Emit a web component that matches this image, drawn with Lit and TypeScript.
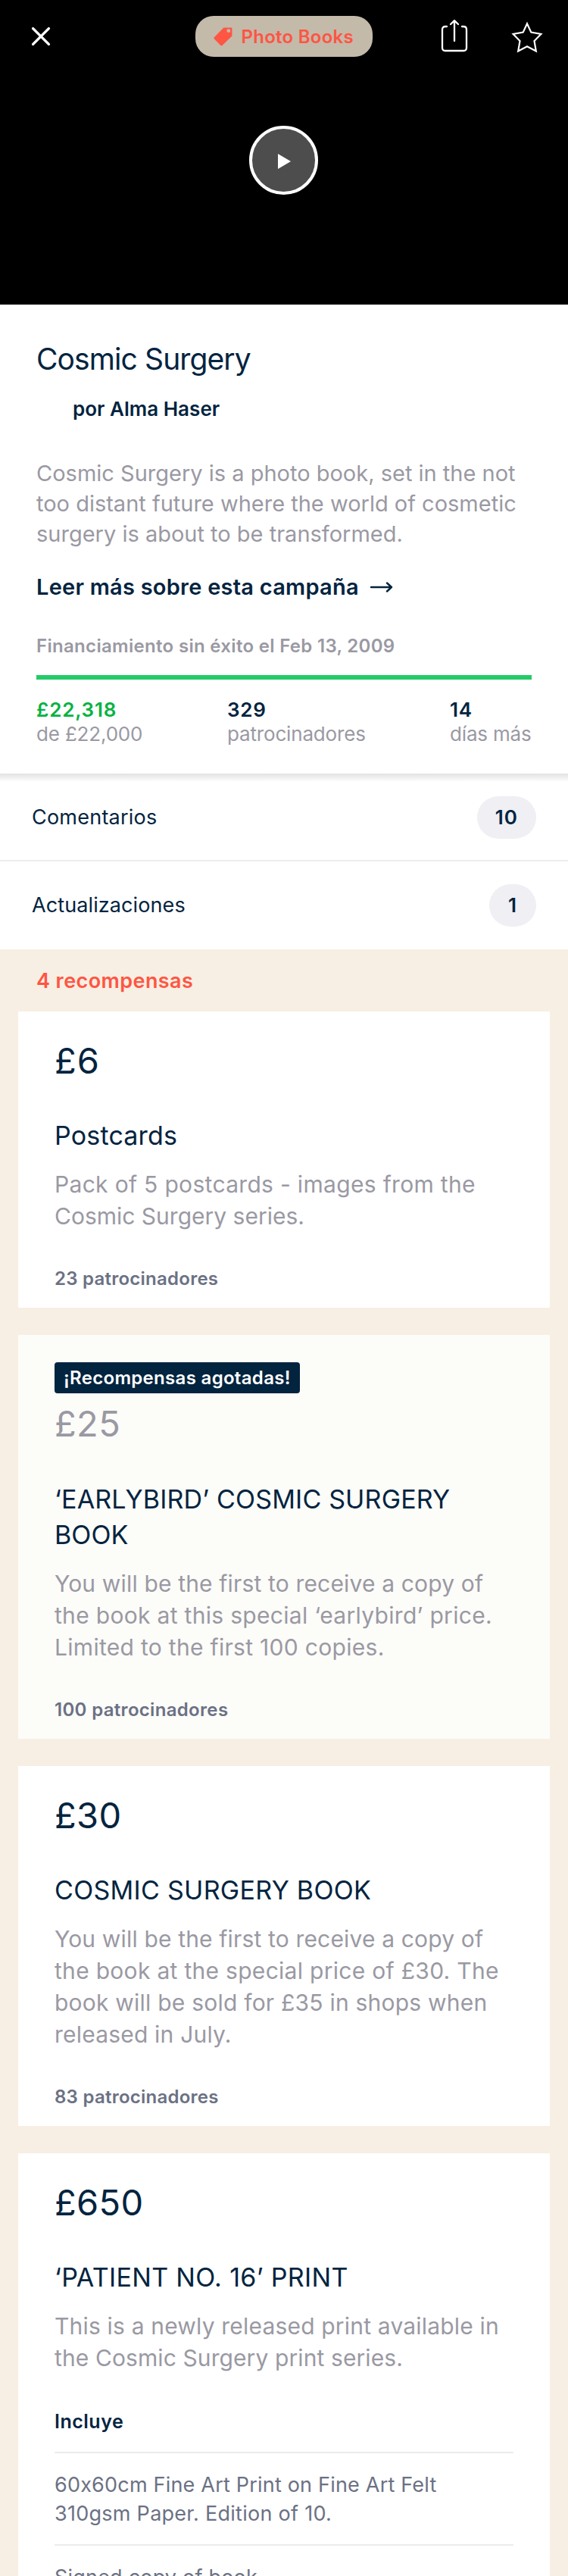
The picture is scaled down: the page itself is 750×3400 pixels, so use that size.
import { LitElement, html, css, svg, nothing } from "lit";
import { customElement, property } from "lit/decorators.js";

/** One line of copy together with its tracking, in px. */
type Line = [text: string, tracking: number];

interface Reward {
  amount: Line;
  title: Line[];
  description: Line[];
  backers?: Line;
  soldOut?: boolean;
  items?: Line[][];
}

const rewards: Reward[] = [
  {
    amount: ["£6", 1],
    title: [["Postcards", 0.18]],
    description: [["Pack of 5 postcards - images from the", 0.316], ["Cosmic Surgery series.", 0]],
    backers: ["23 patrocinadores", 0.25],
  },
  {
    soldOut: true,
    amount: ["£25", 0.4],
    title: [["‘EARLYBIRD’ COSMIC SURGERY", 0.17], ["BOOK", 0.1]],
    description: [
      ["You will be the first to receive a copy of", 0.16],
      ["the book at this special ‘earlybird’ price.", 0.307],
      ["Limited to the first 100 copies.", 0.3],
    ],
    backers: ["100 patrocinadores", 0.32],
  },
  {
    amount: ["£30", 0.4],
    title: [["COSMIC SURGERY BOOK", 0.298]],
    description: [
      ["You will be the first to receive a copy of", 0.16],
      ["the book at the special price of £30. The", 0.296],
      ["book will be sold for £35 in shops when", 0.22],
      ["released in July.", 0.2],
    ],
    backers: ["83 patrocinadores", 0.25],
  },
  {
    amount: ["£650", 0.36],
    title: [["‘PATIENT NO. 16’ PRINT", 0.336]],
    description: [["This is a newly released print available in", 0.184], ["the Cosmic Surgery print series.", 0.1]],
    items: [
      [["60x60cm Fine Art Print on Fine Art Felt", 0.2], ["310gsm Paper. Edition of 10.", 0.267]],
      [["Signed copy of book.", 0.2]],
    ],
  },
];

const lines = (all: Line[]) =>
  all.map(([text, tracking]) => html`<span class="line" style="letter-spacing:${tracking}px">${text}</span>`);

@customElement("reward-card")
export class RewardCard extends LitElement {
  @property({ attribute: false }) reward!: Reward;

  static styles = css`
    :host { display: block; }
    .line { display: block; white-space: nowrap; }
    .card { background: #fff; padding: 37px 48px 23px; }
    .card.sold { background: #fcfcf9; padding-top: 36px; }
    .tag {
      width: 324px; height: 41px; line-height: 41px; margin-bottom: 12px; box-sizing: border-box;
      padding-left: 12px; border-radius: 4px; background: #03243f; color: #fff;
      font-size: 24px; font-weight: 600; letter-spacing: 0.31px; white-space: nowrap;
    }
    .amount { font-size: 47px; line-height: 56px; color: #03243f; }
    .sold .amount { color: #9a99a3; margin-bottom: 49px; }
    .title { margin-top: 47.5px; font-size: 34px; line-height: 46.5px; color: #03243f; }
    .sold .title { margin-top: 0; }
    .desc { margin-top: 20px; font-size: 30px; line-height: 42px; color: #9a99a3; }
    .backers { margin-top: 47px; font-size: 24px; line-height: 30px; font-weight: 600; color: #6b7184; }
    .includes {
      margin-top: 48px; padding-bottom: 24px; font-size: 25px; line-height: 31px;
      font-weight: 600; letter-spacing: 0.5px; color: #03243f;
    }
    .item { border-top: 2px solid #ececee; padding: 23px 0 21px; font-size: 27px; line-height: 38px; color: #6b7184; }
  `;

  render() {
    const r = this.reward;
    return html`
      <article class="card ${r.soldOut ? "sold" : ""}">
        ${r.soldOut ? html`<div class="tag">¡Recompensas agotadas!</div>` : nothing}
        <div class="amount">${lines([r.amount])}</div>
        <div class="title">${lines(r.title)}</div>
        <div class="desc">${lines(r.description)}</div>
        ${r.backers ? html`<div class="backers">${lines([r.backers])}</div>` : nothing}
        ${r.items
          ? html`<div class="includes">Incluye</div>
              ${r.items.map((item) => html`<div class="item">${lines(item)}</div>`)}`
          : nothing}
      </article>
    `;
  }
}

const closeIcon = html`<svg class="close" width="28" height="28" viewBox="0 0 28 28">
  <path d="M3.6 3.6 24.4 24.4M24.4 3.6 3.6 24.4" stroke="#fff" stroke-width="3.4" stroke-linecap="round" />
</svg>`;

const tagIcon = html`<svg width="25" height="25" viewBox="0 0 25 25">
  <path fill="#ff5543" fill-rule="evenodd"
    d="M13.4 0.4H23.2Q24.4 0.4 24.4 1.6V11.4L11.4 24Q10.4 24.8 9.4 24L.8 15.2Q0 14.2.8 13.2ZM19.8 2.3A2.4 2.4 0 1 0 19.8 7.1 2.4 2.4 0 1 0 19.8 2.3Z" />
</svg>`;

const shareIcon = html`<svg class="share" width="36" height="44" viewBox="0 0 36 44">
  ${svg`<g fill="none" stroke="#fff" stroke-width="2.3" stroke-linecap="round" stroke-linejoin="round">
    <path d="M8 10H6Q2 10 2 14V38Q2 42 6 42H30Q34 42 34 38V14Q34 10 30 10H28" />
    <path d="M18 29V2.6M13 7 18 2.2 23 7" />
  </g>`}
</svg>`;

const starIcon = html`<svg class="star" width="46" height="46" viewBox="0 0 46 46">
  <path d="M23 4.2 28.3 15.6 41.4 18 32.5 27.1 34.8 40.4 23 34.3 11.2 40.4 13.5 27.1 4.6 18 17.7 15.6Z"
    fill="none" stroke="#fff" stroke-width="2.2" stroke-linejoin="miter" />
</svg>`;

@customElement("app-root")
export class AppRoot extends LitElement {
  static styles = css`
    :host {
      display: block; width: 750px; height: 3400px; overflow: hidden; background: #fff; color: #03243f;
      font-family: "Inter", "Liberation Sans", sans-serif; font-feature-settings: "calt" 0;
    }
    svg { display: block; flex: none; }
    .hero { height: 402px; background: #000; display: flex; flex-direction: column; align-items: center; }
    .bar { width: 750px; height: 96px; display: flex; align-items: center; box-sizing: border-box; padding-left: 40px; }
    .pill {
      width: 234px; height: 54px; margin-left: 190px; border-radius: 24px; background: #c3baaa;
      display: flex; align-items: center; box-sizing: border-box; padding-left: 23.5px; gap: 12px;
      color: #ff5543; font-size: 24px; line-height: 30px; font-weight: 600; letter-spacing: 0.26px; white-space: nowrap;
    }
    .pill span { padding-top: 1px; }
    .share { margin-left: 90px; margin-top: -2px; }
    .star { margin-left: 55px; margin-top: 4px; }
    .play {
      width: 91px; height: 91px; box-sizing: border-box; border: 4px solid #fff; border-radius: 50%;
      background: #4d4d4d; margin: 70px 0 0 -1px; display: flex; align-items: center; justify-content: center;
    }
    .play svg { margin: 3px 0 0 2px; }
    .summary { padding: 48px 48px 36px; }
    .name { font-size: 39px; line-height: 48px; letter-spacing: -0.9px; }
    .by { margin: 26px 0 0 48px; font-size: 26px; line-height: 32px; font-weight: 600; letter-spacing: 0.02px; }
    .blurb { margin-top: 49px; font-size: 29px; line-height: 40px; color: #9a99a3; white-space: nowrap; }
    .more { margin-top: 30px; display: flex; align-items: center; font-size: 29px; line-height: 40px; font-weight: 600; letter-spacing: 0.24px; white-space: nowrap; }
    .more svg { margin-left: 14px; margin-top: -1px; }
    .status { margin-top: 43px; font-size: 24px; line-height: 30px; font-weight: 600; letter-spacing: 0.31px; color: #9a99a3; }
    .progress { margin: 23px 0 24px; height: 6px; background: #25cb68; }
    .stats { display: grid; grid-template-columns: 252px 294px auto; font-size: 26px; line-height: 32px; white-space: nowrap; }
    .num { font-weight: 600; letter-spacing: 0.8px; }
    .green { color: #07b341; }
    .unit { color: #9a99a3; letter-spacing: -0.17px; }
    .rows { background: linear-gradient(#e2e2e2, #fff 11px); }
    .row { display: flex; align-items: center; justify-content: space-between; height: 116px; box-sizing: border-box; padding: 0 42px; font-size: 27px; line-height: 34px; letter-spacing: 0.1px; }
    .row.first { padding-top: 2px; border-bottom: 2px solid #ececee; letter-spacing: 0.23px; }
    .count {
      height: 56px; line-height: 56px; min-width: 62px; padding: 0 24px; box-sizing: border-box; border-radius: 28px;
      background: #efeff4; font-size: 26px; font-weight: 600; letter-spacing: 1px; text-align: center;
    }
    .rewards { background: #f7efe3; padding: 25px 24px 36px; }
    .heading { padding: 0 24px 23px; font-size: 27px; line-height: 34px; font-weight: 600; letter-spacing: 0.415px; color: #ff5543; }
    .list { display: flex; flex-direction: column; gap: 36px; }
  `;

  render() {
    return html`
      <header class="hero">
        <nav class="bar">
          ${closeIcon}
          <div class="pill">${tagIcon}<span>Photo Books</span></div>
          ${shareIcon}${starIcon}
        </nav>
        <div class="play">
          <svg width="17" height="20" viewBox="0 0 17 20"><path d="M0 0 17 10 0 20Z" fill="#fff" /></svg>
        </div>
      </header>
      <section class="summary">
        <div class="name">Cosmic Surgery</div>
        <div class="by">por Alma Haser</div>
        <div class="blurb">
          Cosmic Surgery is a photo book, set in the not<br />too distant future where the world of cosmetic<br />surgery
          is about to be transformed.
        </div>
        <div class="more">
          <span>Leer más sobre esta campaña</span>
          <svg width="32" height="16" viewBox="0 0 32 16">
            <path d="M2 8H29M23 2.5 29 8 23 13.5" fill="none" stroke="#03243f" stroke-width="2.4" stroke-linecap="round" stroke-linejoin="round" />
          </svg>
        </div>
        <div class="status">Financiamiento sin éxito el Feb 13, 2009</div>
        <div class="progress"></div>
        <div class="stats">
          <div><div class="num green">£22,318</div><div class="unit">de £22,000</div></div>
          <div><div class="num">329</div><div class="unit">patrocinadores</div></div>
          <div><div class="num">14</div><div class="unit">días más</div></div>
        </div>
      </section>
      <section class="rows">
        <div class="row first"><span>Comentarios</span><span class="count">10</span></div>
        <div class="row"><span>Actualizaciones</span><span class="count">1</span></div>
      </section>
      <section class="rewards">
        <div class="heading">4 recompensas</div>
        <div class="list">${rewards.map((r) => html`<reward-card .reward=${r}></reward-card>`)}</div>
      </section>
    `;
  }
}
